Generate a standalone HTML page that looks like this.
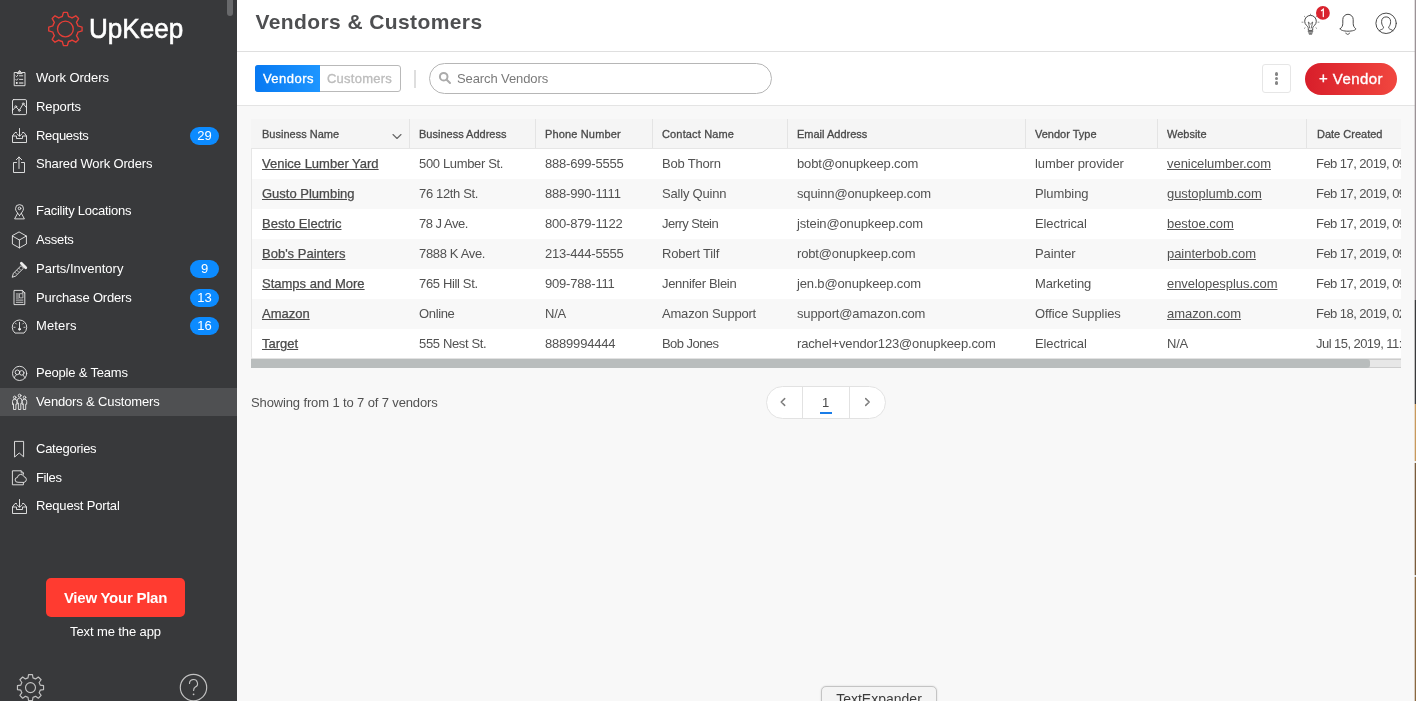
<!DOCTYPE html>
<html lang="en">
<head>
<meta charset="utf-8">
<title>Vendors &amp; Customers</title>
<style>
*{box-sizing:border-box;margin:0;padding:0}
html,body{width:1416px;height:701px;overflow:hidden}
body{font-family:"Liberation Sans",sans-serif;background:#f8f8f8;color:#4a4a4a;position:relative;font-size:13px}
body>*{will-change:transform}
/* ---------- sidebar ---------- */
#side{position:absolute;left:0;top:0;width:237px;height:701px;background:#38393b;color:#fff}
#side .thumb{position:absolute;left:227px;top:0;width:6px;height:16px;background:#68696b;border-radius:0 0 3px 3px}
#ico{position:absolute;left:0;top:0;pointer-events:none}
#logotext{position:absolute;left:88.500px;top:11px;font-size:27px;line-height:36px;color:#fff;white-space:nowrap;-webkit-text-stroke:.6px #fff;transform:scaleX(.965);transform-origin:0 0}
.nav{position:absolute;left:0;width:237px;height:29px;line-height:29px;white-space:nowrap}
.nav.on{background:linear-gradient(#4f5052,#4f5052) 0 1px/100% 28px no-repeat}
.nav span.t{position:absolute;left:36px;top:0;font-size:13px;letter-spacing:-.25px}
.nav svg{position:absolute;left:11px;top:6px;width:18px;height:18px;fill:none;stroke:#fff;stroke-width:1;stroke-linecap:round;stroke-linejoin:round}
.nav .b{position:absolute;left:190px;top:6px;width:29px;height:18px;line-height:18px;border-radius:9px;background:#0c8bff;color:#fff;text-align:center;font-size:13px}
#plan{position:absolute;left:46px;top:578px;width:139px;height:39px;border-radius:5px;letter-spacing:-.25px;background:#ff3b30;color:#fff;font-weight:bold;font-size:15px;line-height:39px;text-align:center;white-space:nowrap}
#textme{position:absolute;left:0;top:623px;width:231px;text-align:center;font-size:13px;line-height:18px;color:#fff;letter-spacing:-.1px}
/* ---------- main ---------- */
#head{position:absolute;left:237px;top:0;width:1179px;height:52px;background:#fff;border-bottom:1px solid #dfdfdf}
#title{position:absolute;left:18.5px;top:7px;font-size:21px;line-height:30px;font-weight:bold;color:#4e4f51;letter-spacing:.4px;white-space:nowrap}
#bar{position:absolute;left:237px;top:52px;width:1179px;height:54px;background:#fff;border-bottom:1px solid #e4e4e4}
#edge{position:absolute;left:1414px;top:0;width:2px;height:701px;background:linear-gradient(#9b9296 0,#9b9296 300px,#3a3a3c 300px,#3a3a3c 404px,#c8995c 404px,#c8995c 461px,#eee 461px,#eee 463px,#7a5c3c 463px,#7a5c3c 575px,#ddd 575px,#ddd 577px,#8a6840 577px);-webkit-mask-image:linear-gradient(90deg,rgba(0,0,0,.3) 0,rgba(0,0,0,.3) 1px,#000 1px)}

/* toolbar */
#tog{position:absolute;left:18px;top:13px;width:146px;height:27px;border:1px solid #b9b9b9;border-radius:3px;background:#fff}
#tog .v{position:absolute;left:-1px;top:-1px;width:65px;height:27px;padding-left:2px;border-radius:3px 0 0 3px;background:linear-gradient(90deg,#0779f2,#1e96ff);color:#fff;text-align:center;line-height:27px;font-size:13px;letter-spacing:.5px;-webkit-text-stroke:.35px #fff}
#tog .c{position:absolute;left:63px;top:-1px;width:81px;height:27px;color:#bdbdbd;text-align:center;line-height:27px;font-size:13px;letter-spacing:.25px;-webkit-text-stroke:.35px #bdbdbd}
#sep{position:absolute;left:177.300px;top:18px;width:1.500px;height:18px;background:#dedede}
#search{position:absolute;left:192px;top:11px;width:343px;height:31px;border:1px solid #b6b6b6;border-radius:16px;background:#fff}
#search span{position:absolute;left:27px;top:0;line-height:29px;font-size:13px;color:#7a7a7a;letter-spacing:-.1px}
#search svg{position:absolute;left:7.500px;top:6.500px}
#kebab{position:absolute;left:1025px;top:12px;width:29px;height:29px;border:1px solid #e6e6e6;border-radius:3px;background:#fff}
#kebab i{position:absolute;left:11.700px;width:3.600px;height:3.600px;border-radius:50%;background:#858585}
#add{position:absolute;left:1068px;top:11px;width:92px;height:32px;border-radius:16px;background:linear-gradient(90deg,#d81e2a,#f1473f);color:#fff;font-size:15px;line-height:31px;text-align:center;letter-spacing:.45px;-webkit-text-stroke:.35px #fff;white-space:nowrap}
/* table */
#tbl{position:absolute;left:251px;top:119px;width:1149.500px;height:240px;overflow:hidden}
#th{position:absolute;left:0;top:0;width:1150px;height:30px;background:#f5f5f5}
#th div{position:absolute;top:0;height:30px;line-height:31px;font-size:11px;color:#4a4a4a;-webkit-text-stroke:.3px #4a4a4a;white-space:nowrap;border-left:1px solid #e4e4e4;padding-left:10px}
#th div:first-child{border-left:0;padding-left:11px}
.r{position:absolute;left:0;width:1150px;height:30px;white-space:nowrap}
.r.w{background:#fff}
.r span{position:absolute;top:0;line-height:30px;font-size:13px;color:#525252;letter-spacing:-.2px}
.r span.n{color:#4a4a4a;-webkit-text-stroke:.25px #4a4a4a;text-decoration:underline;letter-spacing:0}
.r span.u{text-decoration:underline}
#tb{position:absolute;left:251px;top:148px;width:1150px;height:211px;border:1px solid #e6e6e6;border-right:0;border-bottom:0;border-radius:0 0 0 3px;pointer-events:none}
#hs{position:absolute;left:251px;top:358px;width:1149.500px;height:10px;border-top:1px solid #e2e2e2;background:linear-gradient(#cdcdcd 0,#cdcdcd 1px,#e7e7e7 1px,#e7e7e7 8px,#cdcdcd 8px)}
#hs i{position:absolute;left:0;top:0;width:1119px;height:9px;background:#b9bdbd;border-radius:0 3px 3px 0}
#show{position:absolute;left:250.500px;top:394px;line-height:18px;font-size:13px;color:#525252;letter-spacing:-.13px;white-space:nowrap}
#pg{position:absolute;left:766px;top:386px;width:120px;height:33px;border:1px solid #e2e2e2;border-radius:17px;background:#fff}
#pg .s1{position:absolute;left:35px;top:0;width:1px;height:31px;background:#e2e2e2}
#pg .s2{position:absolute;left:82px;top:0;width:1px;height:31px;background:#e2e2e2}
#pg .one{position:absolute;left:35px;top:0;width:47px;line-height:31px;text-align:center;font-size:13px;color:#4a4a4a}
#pg .ul{position:absolute;left:53px;top:25px;width:12px;height:2px;background:#1a7de8}
#pg svg{position:absolute;top:0;left:0}
#tip{position:absolute;left:821px;top:686px;width:116px;height:30px;border:1px solid #c4c4c4;border-radius:5px;background:#f4f4f4;font-size:14px;line-height:25px;text-align:center;color:#3c3c3c;box-shadow:0 0 2px rgba(0,0,0,.15)}
</style>
</head>
<body>
<div id="side">
  <div class="thumb"></div>
  <div id="logotext">UpKeep</div>
  <div class="nav" style="top:63px"><span class="t" style="letter-spacing:-0.05px">Work Orders</span></div>
  <div class="nav" style="top:92px"><span class="t" style="letter-spacing:-0.08px">Reports</span></div>
  <div class="nav" style="top:121px"><span class="t" style="letter-spacing:-0.32px">Requests</span><span class="b">29</span></div>
  <div class="nav" style="top:149px"><span class="t" style="letter-spacing:-0.15px">Shared Work Orders</span></div>
  <div class="nav" style="top:196px"><span class="t" style="letter-spacing:-0.25px">Facility Locations</span></div>
  <div class="nav" style="top:225px"><span class="t" style="letter-spacing:-0.25px">Assets</span></div>
  <div class="nav" style="top:254px"><span class="t" style="letter-spacing:0.00px">Parts/Inventory</span><span class="b">9</span></div>
  <div class="nav" style="top:283px"><span class="t" style="letter-spacing:-0.18px">Purchase Orders</span><span class="b">13</span></div>
  <div class="nav" style="top:311px"><span class="t" style="letter-spacing:0.15px">Meters</span><span class="b">16</span></div>
  <div class="nav" style="top:358px"><span class="t" style="letter-spacing:-0.19px">People &amp; Teams</span></div>
  <div class="nav on" style="top:387px"><span class="t" style="letter-spacing:-0.15px">Vendors &amp; Customers</span></div>
  <div class="nav" style="top:434px"><span class="t" style="letter-spacing:-0.25px">Categories</span></div>
  <div class="nav" style="top:463px"><span class="t" style="letter-spacing:-0.38px">Files</span></div>
  <div class="nav" style="top:491px"><span class="t" style="letter-spacing:-0.17px">Request Portal</span></div>
  <svg id="ico" width="237" height="701" viewBox="0 0 237 701">
    <!-- logo gear -->
    <g fill="none" stroke="#e53e37" stroke-width="1.350" stroke-linejoin="round">
      <path d="M62.29 16.48 L63.43 12.32 L67.37 12.32 L68.51 16.48 A12.90 12.90 0 0 1 72.05 17.95 L75.80 15.81 L78.59 18.60 L76.45 22.35 A12.90 12.90 0 0 1 77.92 25.89 L82.08 27.03 L82.08 30.97 L77.92 32.11 A12.90 12.90 0 0 1 76.45 35.65 L78.59 39.40 L75.80 42.19 L72.05 40.05 A12.90 12.90 0 0 1 68.51 41.52 L67.37 45.68 L63.43 45.68 L62.29 41.52 A12.90 12.90 0 0 1 58.75 40.05 L55.00 42.19 L52.21 39.40 L54.35 35.65 A12.90 12.90 0 0 1 52.88 32.11 L48.72 30.97 L48.72 27.03 L52.88 25.89 A12.90 12.90 0 0 1 54.35 22.35 L52.21 18.60 L55.00 15.81 L58.75 17.95 A12.90 12.90 0 0 1 62.29 16.48 Z"/>
      <circle cx="65.400" cy="29" r="7.900"/>
    </g>
    <g fill="none" stroke="#ececec" stroke-width=".9" stroke-linecap="round" stroke-linejoin="round">
      <!-- 1 clipboard -->
      <path d="M17.200 72.500H14.200v13.200h10.800v-13.200H22"/><path d="M17.300 73.300l2.300-2.800 2.300 2.800z" fill="#bbb"/>
      <path d="M15.900 76l.7.700 1.200-1.500M19.500 75.800H22.800M15.900 79.600l.7.700 1.200-1.500M19.500 79.400H22.800"/><path d="M19.500 83H22.800" stroke-width="1.500" stroke="#bbb"/><rect x="15.900" y="82.100" width="1.700" height="1.700" fill="#fff" stroke="none"/>
      <!-- 2 chart -->
      <rect x="12.500" y="99.600" width="14" height="15" rx="1.200"/>
      <path d="M12.5 110.4l3.300-3.800 3.500 3.800 3.900-6.600 3.300 3.800"/><g fill="#38393b" stroke-width=".8"><circle cx="15.800" cy="106.600" r=".9"/><circle cx="19.300" cy="110.400" r=".9"/><circle cx="23.200" cy="103.800" r=".9"/></g>
      <!-- 3 inbox -->
      <path d="M16.5 132.5H15l-2.5 3.5v6.5h14V136L24 132.5h-1.500"/><path d="M12.500 136h4v2.500h6V136h4"/><path d="M19.500 128.500v7.500M17 133.800l2.500 2.500 2.500-2.500"/>
      <!-- 4 share -->
      <path d="M16.500 162.500h-3v10h11v-10h-3"/><path d="M19 168.500v-11.500M16.300 159.700L19 157l2.700 2.700"/>
      <!-- 5 pin -->
      <path d="M19.500 215.600c-1.900-2.800-4-4.700-4-7a4 4 0 0 1 8 0c0 2.300-2.100 4.200-4 7z"/><circle cx="19.500" cy="208.400" r="1.300"/><path d="M17.600 213.300l-3 5.600h9.800l-3-5.600"/>
      <!-- 6 cube -->
      <path d="M19.400 232.100l7 3.900v8l-7 3.900-7-3.900v-8zM12.400 236l7 4 7-4M19.400 240v7.900"/>
      <!-- 7 screw -->
      <path d="M12.300 276.900l1.100-3.600 7.700-7.700 2.500 2.500-7.700 7.700z"/><path d="M21.300 263.200l4.500 4.500" stroke-width="2.700" stroke="#ececec"/><path d="M14.900 272.300l1.600 1.600M16.900 270.300l1.600 1.600M18.900 268.300l1.600 1.600" stroke-width=".7"/>
      <!-- 8 document -->
      <path d="M14.400 290.400h8l2.400 2.400v11.800h-10.400z"/><path d="M22.400 290.400v2.400h2.400" stroke-width=".7"/><path d="M16.300 294h2.200M16.300 296h2.200M16.300 298h2.200M16.300 300.100h6.600M16.300 302.300h6.600" stroke-width=".8"/><rect x="19.800" y="293.700" width="3.100" height="4.200" stroke-width=".7"/>
      <!-- 9 meter -->
      <path d="M14.700 332.800a7.300 7.300 0 1 1 9.600 0z"/><path d="M19.500 322.300v5.700"/><circle cx="19.500" cy="329.200" r="1" fill="#ececec"/><path d="M13.900 327.300h1.200M23.900 327.300h1.200M15.500 323.200l.8.800M23.500 323.200l-.8.800" stroke-width=".8"/>
      <!-- 10 people circle -->
      <circle cx="19.600" cy="373.400" r="7.100"/><circle cx="17.400" cy="372.300" r="2.300"/><circle cx="21.700" cy="372.900" r="2.300"/><path d="M14.400 378c.2-1.800 1.200-3 2.600-3.300M23 375l2.200 3" stroke-width=".8"/>
      <!-- 11 three people -->
      <path d="M12.500 404.200v-2.800a2.200 2.200 0 0 1 4.400 0v2.800h-1v5.300h-2.400v-5.300z"/><path d="M22.300 404.200v-2.800a2.200 2.200 0 0 1 4.400 0v2.800h-1v5.300h-2.400v-5.300z"/><circle cx="14.700" cy="397.400" r="1.300"/><circle cx="24.500" cy="397.400" r="1.300"/><path d="M17.400 403.400v-3.200a2.200 2.200 0 0 1 4.400 0v3.200h-1v6.100h-2.400v-6.100z" fill="#4f5052"/><circle cx="19.600" cy="395.600" r="1.400"/>
      <!-- 12 bookmark -->
      <path d="M14.900 441.400h8.700v15.400l-4.350-3.800-4.350 3.800z"/>
      <!-- 13 files -->
      <path d="M23.400 482.800v2h-11v-14h8.800l2.200 2.200v1.300"/><path d="M21.200 470.800v2.200h2.200" stroke-width=".7"/><path d="M17.600 482.300a2.400 2.400 0 0 1-.2-4.800 3.400 3.400 0 0 1 6.600-.8 2.900 2.900 0 0 1 .4 5.600z" fill="#38393b"/>
      <!-- 14 inbox -->
      <g transform="translate(0,371)"><path d="M16.500 132.500H15l-2.500 3.500v6.500h14V136L24 132.500h-1.500"/><path d="M12.500 136h4v2.500h6V136h4"/><path d="M19.500 128.500v7.500M17 133.800l2.500 2.500 2.500-2.500"/></g>
    </g>
    <!-- settings gear + help -->
    <g fill="none" stroke="#c2c2c2" stroke-width="1.150" stroke-linejoin="round" stroke-linecap="round">
      <path d="M28.01 677.91 L28.54 674.55 L32.46 674.55 L32.99 677.91 A10.00 10.00 0 0 1 35.59 678.99 L38.34 676.98 L41.12 679.76 L39.11 682.51 A10.00 10.00 0 0 1 40.19 685.11 L43.55 685.64 L43.55 689.56 L40.19 690.09 A10.00 10.00 0 0 1 39.11 692.69 L41.12 695.44 L38.34 698.22 L35.59 696.21 A10.00 10.00 0 0 1 32.99 697.29 L32.46 700.65 L28.54 700.65 L28.01 697.29 A10.00 10.00 0 0 1 25.41 696.21 L22.66 698.22 L19.88 695.44 L21.89 692.69 A10.00 10.00 0 0 1 20.81 690.09 L17.45 689.56 L17.45 685.64 L20.81 685.11 A10.00 10.00 0 0 1 21.89 682.51 L19.88 679.76 L22.66 676.98 L25.41 678.99 A10.00 10.00 0 0 1 28.01 677.91 Z"/><circle cx="30.500" cy="687.600" r="5"/>
      <circle cx="193.500" cy="687.600" r="13.200"/>
      <path d="M189.500 683.500a4 4 0 1 1 5.800 3.600c-1.200.7-1.700 1.500-1.700 3.400"/>
    </g>
    <circle cx="193.600" cy="694.300" r=".9" fill="#c2c2c2"/>
  </svg>
  <div id="plan">View Your Plan</div>
  <div id="textme">Text me the app</div>
</div>
<div id="head"><div id="title">Vendors &amp; Customers</div>
  <svg id="hico" width="130" height="50" viewBox="1286 0 130 50" style="position:absolute;left:1049px;top:0" fill="none" stroke="#4a4a4a" stroke-width="1" stroke-linecap="round" stroke-linejoin="round">
    <!-- bulb -->
    <path d="M1308.300 30v-1.600c0-1.200-.8-2-1.800-3a5.800 5.800 0 1 1 8 0c-1 1-1.800 1.800-1.800 3V30z"/>
    <path d="M1308.300 31.300h4.400M1308.600 32.800h3.800M1309.500 34.200h2" stroke="#777" stroke-width="1.300"/>
    <path d="M1309.700 28l-1.400-6 2.200 2 2.200-2-1.400 6" stroke-width=".8"/>
    <path d="M1310.500 14.200v1M1302 22.200h1M1318 22.200h1M1304.300 16.200l.8.800M1316.700 16.200l-.8.800M1304.300 28.400l.8-.7M1316.700 28.400l-.8-.7" stroke-width=".8" stroke="#777"/>
    <circle cx="1322.900" cy="12.900" r="6.900" fill="#d9232e" stroke="none"/>
    <path d="M1321.400 10.700l1.900-1.500v7.400" stroke="#fff" stroke-width="1.250" stroke-linejoin="miter"/>
    <!-- bell -->
    <path d="M1340.200 28.800c1.800-1.500 2.600-3 2.600-5.500v-3.800a5.200 5.200 0 0 1 10.400 0v3.800c0 2.500.8 4 2.600 5.500.2 1.400-3.600 2.400-7.800 2.400s-8-1-7.800-2.400z"/>
    <path d="M1345.900 33.100c.4 1.800 3.200 1.800 3.600 0"/>
    <!-- user -->
    <circle cx="1386.100" cy="23.300" r="10.200"/>
    <path d="M1379.200 30.600c1.500-1 3.600-1.400 4.200-2.400.3-.7.100-1.200-.4-1.900-1-1.300-1.400-2.800-1.400-4.800 0-2.800 1.800-4.600 4.500-4.600s4.500 1.800 4.500 4.600c0 2-.4 3.500-1.400 4.800-.5.700-.7 1.200-.4 1.900.6 1 2.700 1.400 4.200 2.400"/>
  </svg>
</div>
<div id="bar">
  <div id="tog"><div class="v">Vendors</div><div class="c">Customers</div></div>
  <div id="sep"></div>
  <div id="search"><svg width="14" height="14" viewBox="0 0 14 14" fill="none" stroke="#ababab" stroke-width="2" stroke-linecap="round"><circle cx="5.700" cy="5.700" r="3.800"/><path d="M8.700 8.700l3.300 3.300"/></svg><span>Search Vendors</span></div>
  <div id="kebab"><i style="top:7.300px"></i><i style="top:11.800px"></i><i style="top:16.300px"></i></div>
  <div id="add"><span style="position:relative;top:-1.500px">+</span> Vendor</div>
</div>
<div id="tbl">
  <div id="th"><div style="left:0px">Business Name</div><div style="left:158px;padding-left:9px">Business Address</div><div style="left:284px;padding-left:9px;letter-spacing:.15px">Phone Number</div><div style="left:401px;padding-left:9px;letter-spacing:.15px">Contact Name</div><div style="left:536px;padding-left:9px">Email Address</div><div style="left:774px;padding-left:9px">Vendor Type</div><div style="left:906px;padding-left:9px">Website</div><div style="left:1055px;padding-left:10px">Date Created</div><svg style="position:absolute;left:141px;top:14px" width="10" height="7" viewBox="0 0 10 7" fill="none" stroke="#666" stroke-width="1.100" stroke-linecap="round" stroke-linejoin="round"><path d="M1 1.500l4 4 4-4"/></svg></div>
    <div class="r w" style="top:30px"><span class="n" style="left:11px">Venice Lumber Yard</span><span style="left:168px;letter-spacing:-.35px">500 Lumber St.</span><span style="left:294px">888-699-5555</span><span style="left:411px">Bob Thorn</span><span style="left:546px;letter-spacing:-.15px">bobt@onupkeep.com</span><span style="left:784px;letter-spacing:-.1px">lumber provider</span><span class="u" style="left:916px;letter-spacing:-.05px">venicelumber.com</span><span style="left:1065px;letter-spacing:-.55px">Feb 17, 2019, 09:12 AM</span></div>
  <div class="r" style="top:60px"><span class="n" style="left:11px">Gusto Plumbing</span><span style="left:168px;letter-spacing:-.35px">76 12th St.</span><span style="left:294px">888-990-1111</span><span style="left:411px">Sally Quinn</span><span style="left:546px;letter-spacing:-.15px">squinn@onupkeep.com</span><span style="left:784px;letter-spacing:-.1px">Plumbing</span><span class="u" style="left:916px;letter-spacing:-.05px">gustoplumb.com</span><span style="left:1065px;letter-spacing:-.55px">Feb 17, 2019, 09:14 AM</span></div>
  <div class="r w" style="top:90px"><span class="n" style="left:11px">Besto Electric</span><span style="left:168px;letter-spacing:-.5px">78 J Ave.</span><span style="left:294px">800-879-1122</span><span style="left:411px;letter-spacing:-.55px">Jerry Stein</span><span style="left:546px;letter-spacing:-.15px">jstein@onupkeep.com</span><span style="left:784px;letter-spacing:-.1px">Electrical</span><span class="u" style="left:916px;letter-spacing:-.05px">bestoe.com</span><span style="left:1065px;letter-spacing:-.55px">Feb 17, 2019, 09:15 AM</span></div>
  <div class="r" style="top:120px"><span class="n" style="left:11px">Bob's Painters</span><span style="left:168px;letter-spacing:-.35px">7888 K Ave.</span><span style="left:294px">213-444-5555</span><span style="left:411px">Robert Tilf</span><span style="left:546px;letter-spacing:-.15px">robt@onupkeep.com</span><span style="left:784px;letter-spacing:-.1px">Painter</span><span class="u" style="left:916px;letter-spacing:-.05px">painterbob.com</span><span style="left:1065px;letter-spacing:-.55px">Feb 17, 2019, 09:16 AM</span></div>
  <div class="r w" style="top:150px"><span class="n" style="left:11px">Stamps and More</span><span style="left:168px;letter-spacing:-.35px">765 Hill St.</span><span style="left:294px">909-788-111</span><span style="left:411px;letter-spacing:-.32px">Jennifer Blein</span><span style="left:546px;letter-spacing:-.15px">jen.b@onupkeep.com</span><span style="left:784px;letter-spacing:-.1px">Marketing</span><span class="u" style="left:916px;letter-spacing:-.05px">envelopesplus.com</span><span style="left:1065px;letter-spacing:-.55px">Feb 17, 2019, 09:18 AM</span></div>
  <div class="r" style="top:180px"><span class="n" style="left:11px">Amazon</span><span style="left:168px;letter-spacing:-.35px">Online</span><span style="left:294px">N/A</span><span style="left:411px">Amazon Support</span><span style="left:546px;letter-spacing:-.15px">support@amazon.com</span><span style="left:784px;letter-spacing:-.1px">Office Supplies</span><span class="u" style="left:916px;letter-spacing:-.05px">amazon.com</span><span style="left:1065px;letter-spacing:-.55px">Feb 18, 2019, 02:31 PM</span></div>
  <div class="r w" style="top:210px"><span class="n" style="left:11px">Target</span><span style="left:168px;letter-spacing:-.35px">555 Nest St.</span><span style="left:294px">8889994444</span><span style="left:411px;letter-spacing:-.55px">Bob Jones</span><span style="left:546px;letter-spacing:-.15px">rachel+vendor123@onupkeep.com</span><span style="left:784px;letter-spacing:-.1px">Electrical</span><span style="left:916px">N/A</span><span style="left:1065px;letter-spacing:-.55px">Jul 15, 2019, 11:42 AM</span></div>
</div>
<div id="tb"></div>
<div id="hs"><i></i></div>
<div id="show">Showing from 1 to 7 of 7 vendors</div>
<div id="pg"><div class="s1"></div><div class="s2"></div><div class="one">1</div><div class="ul"></div>
  <svg width="118" height="31" viewBox="0 0 118 31" fill="none" stroke="#7d7d7d" stroke-width="1.500" stroke-linecap="round" stroke-linejoin="round"><path d="M17.700 11.600l-3.500 3.400 3.500 3.400M98.700 11.600l3.500 3.400-3.500 3.400"/></svg>
</div>
<div id="tip">TextExpander</div>
<div id="edge"></div>
</body>
</html>
